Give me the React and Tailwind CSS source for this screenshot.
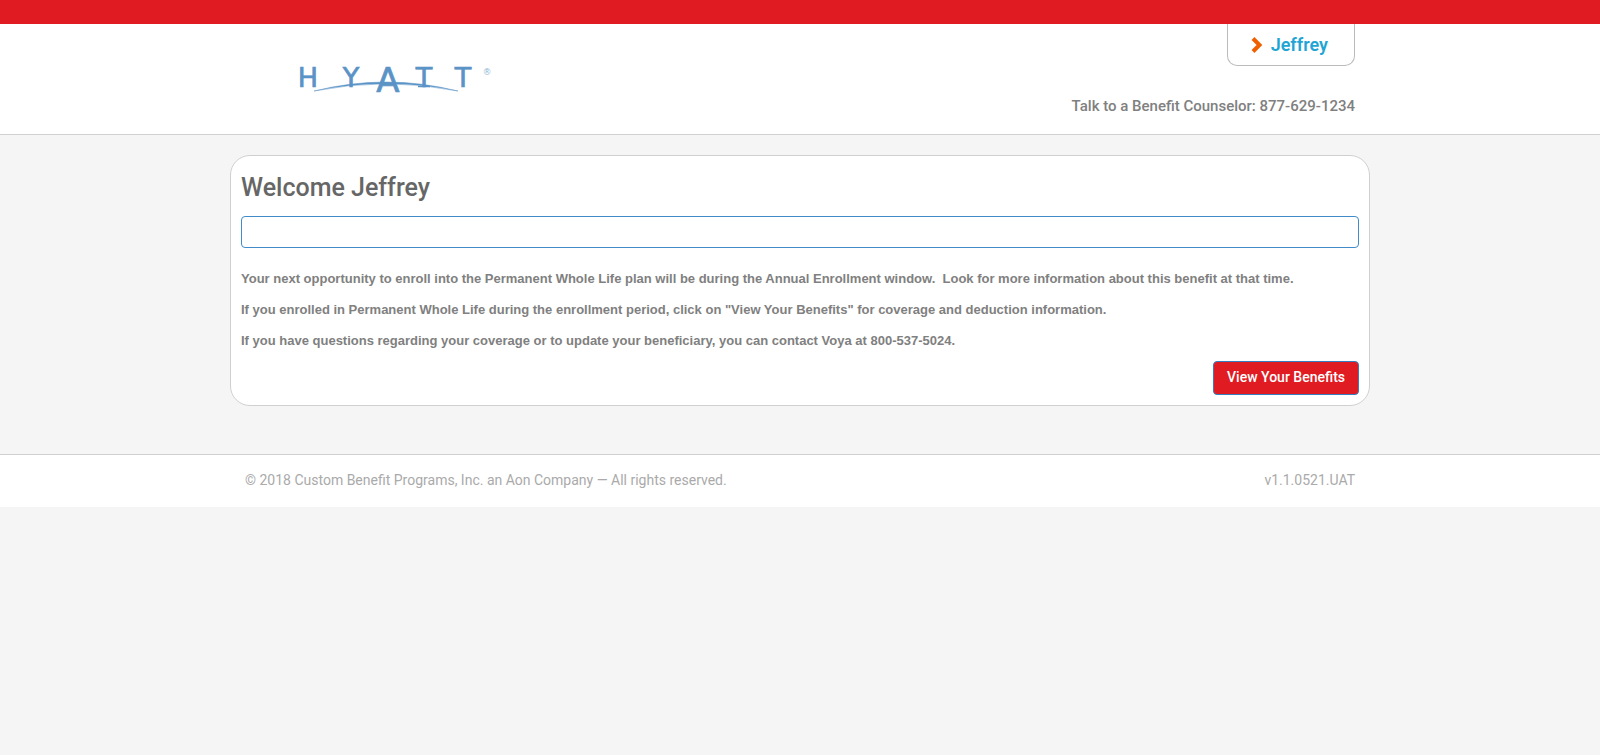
function Logo() {
  return (
    <svg
      role="img"
      aria-label="Hyatt"
      viewBox="0 0 208 44"
      className="h-11 w-52 overflow-visible"
      fill="#5a93c6"
    >
      <g fontFamily="DejaVu Sans, sans-serif" fontSize="27" textAnchor="middle" stroke="#5a93c6" strokeWidth="0.7">
        <text x="16" y="29">H</text>
        <text x="59" y="29">Y</text>
        <text x="96" y="34" fontSize="34">A</text>
        <text x="132" y="29">T</text>
        <text x="171" y="29">T</text>
        <text x="195" y="17" fontSize="9" fillOpacity="0.7" stroke="none">®</text>
      </g>
      <path d="M126 28.500 H138" stroke="#5a93c6" strokeWidth="1.500" />
      <path d="M22 33 Q94 15 166 33 Q94 18.500 22 33Z" stroke="#5a93c6" strokeWidth="0.500" />
    </svg>
  );
}

function Arrow() {
  return (
    <svg aria-hidden="true" viewBox="0 0 12 16" className="h-4 w-3" fill="none">
      <path d="M2 1.500 L8.500 8 L2 14.500" stroke="#ef6000" strokeWidth="4" />
    </svg>
  );
}

export default function App() {
  return (
    <div className="min-h-screen bg-[#f5f5f5] font-[Roboto,sans-serif] text-[#808080]">
      <header className="border-b border-[#d0d0d0] bg-white">
        <div className="h-6 bg-[#e11b22]" />
        <div className="mx-auto flex max-w-[1140px] items-start justify-between pr-[15px] pl-[62px]">
          <a href="#home" className="mt-[34px]">
            <Logo />
          </a>
          <div className="flex flex-col items-end">
            <button
              type="button"
              className="flex h-[42px] items-center gap-2 rounded-b-[10px] border border-t-0 border-[#bbb] pr-[26px] pl-[23px] text-lg font-semibold text-[#1fa5d4]"
            >
              <Arrow />
              Jeffrey
            </button>
            <p className="mt-[30px] mb-[18px] text-[15px] leading-5 font-medium">
              Talk to a Benefit Counselor: 877-629-1234
            </p>
          </div>
        </div>
      </header>

      <main className="mx-auto mt-5 mb-12 max-w-[1140px] rounded-[20px] border border-[#d0d0d0] bg-white p-[10px]">
        <h1 className="mt-2 text-[25px] leading-7 font-medium text-[#666]">Welcome Jeffrey</h1>
        <input
          type="text"
          aria-label="Message"
          className="mt-[14px] block h-8 w-full rounded border border-[#428bca] bg-white px-3"
        />
        <div className="mt-[21px] flex flex-col gap-[11px] font-['Liberation_Sans',Arial,sans-serif] text-[13px] leading-5 font-bold">
          <p>
            Your next opportunity to enroll into the Permanent Whole Life plan will be during the Annual
            Enrollment window.&nbsp; Look for more information about this benefit at that time.
          </p>
          <p>
            If you enrolled in Permanent Whole Life during the enrollment period, click on "View Your
            Benefits" for coverage and deduction information.
          </p>
          <p>
            If you have questions regarding your coverage or to update your beneficiary, you can contact
            Voya at 800-537-5024.
          </p>
        </div>
        <div className="mt-[10px] flex justify-end">
          <button
            type="button"
            className="h-[34px] rounded border border-[#357ebd] bg-[#e11b22] px-[13px] pb-0.5 text-sm font-medium text-white"
          >
            View Your Benefits
          </button>
        </div>
      </main>

      <footer className="border-t border-[#d0d0d0] bg-white">
        <div className="mx-auto flex max-w-[1140px] justify-between px-[15px] pt-[15px] pb-[17px] text-sm leading-5 text-[#aaa]">
          <p>© 2018 Custom Benefit Programs, Inc. an Aon Company — All rights reserved.</p>
          <p>v1.1.0521.UAT</p>
        </div>
      </footer>
    </div>
  );
}
